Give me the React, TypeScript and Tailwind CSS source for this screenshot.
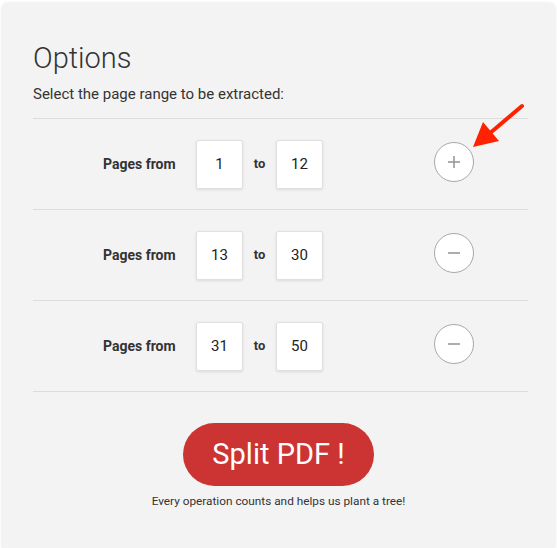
import React from 'react'

const ranges = [
    { from: 1, to: 12, add: true },
    { from: 13, to: 30, add: false },
    { from: 31, to: 50, add: false },
]

function RoundButton({ add }: { add: boolean }) {
    return (
        <button className="w-10 h-10 rounded-full border border-[#a8a8a8] bg-white flex items-center justify-center">
            <svg width="14" height="14" viewBox="0 0 14 14">
                <path d="M1 7h12" stroke="#999" strokeWidth="1.6" />
                {add && <path d="M7 1v12" stroke="#999" strokeWidth="1.6" />}
            </svg>
        </button>
    )
}

export default function App() {
    return (
        <div className="relative min-h-[548px] bg-white pt-[3px] px-[2px] font-['Roboto','Liberation_Sans',sans-serif] text-[#333]">
            <div className="bg-[#f3f3f3] rounded-t-[6px] shadow-[0_0_3px_rgba(0,0,0,0.12)] min-h-[545px] pt-[39px] pl-[31px] pr-[27px]">
                <h1 className="text-[29px] leading-[32px] font-light text-[#333]">Options</h1>
                <p className="text-[15px] leading-[20px] mt-[10px] text-[#333]">Select the page range to be extracted:</p>

                <div className="mt-[14px] border-t border-[#dcdcdc]">
                    {ranges.map((r, i) => (
                        <div key={i} className="h-[91px] border-b border-[#dcdcdc] flex items-center">
                            <span className="ml-[70px] w-[72px] text-[14px] font-bold text-[#333] whitespace-nowrap">Pages from</span>
                            <div className="ml-[21px] w-[47px] h-[49px] bg-white border border-[#e0e0e0] rounded-[2px] shadow-[0_1px_3px_rgba(0,0,0,0.1)] flex items-center justify-center text-[15px] text-[#222]">
                                {r.from}
                            </div>
                            <span className="w-[33px] text-center text-[13px] font-bold text-[#333]">to</span>
                            <div className="w-[47px] h-[49px] bg-white border border-[#e0e0e0] rounded-[2px] shadow-[0_1px_3px_rgba(0,0,0,0.1)] flex items-center justify-center text-[15px] text-[#222]">
                                {r.to}
                            </div>
                            <div className="ml-auto mr-[54px] -mt-[4px]">
                                <RoundButton add={r.add} />
                            </div>
                        </div>
                    ))}
                </div>

                <div className="flex flex-col items-center pr-[4px]">
                    <button className="mt-[31px] w-[191px] h-[63px] rounded-full bg-[#cc3333] text-white text-[29px] font-normal">
                        Split PDF !
                    </button>
                    <p className="mt-[7px] text-[11.8px] leading-[16px] text-[#333]">Every operation counts and helps us plant a tree!</p>
                </div>
            </div>

            <svg className="absolute left-[468px] top-[100px]" width="60" height="52" viewBox="468 100 60 52">
                <path d="M522 106 L489 134" stroke="#ff2200" strokeWidth="4" strokeLinecap="round" />
                <polygon points="473,147 483,122 499,141" fill="#ff2200" />
            </svg>
        </div>
    )
}
